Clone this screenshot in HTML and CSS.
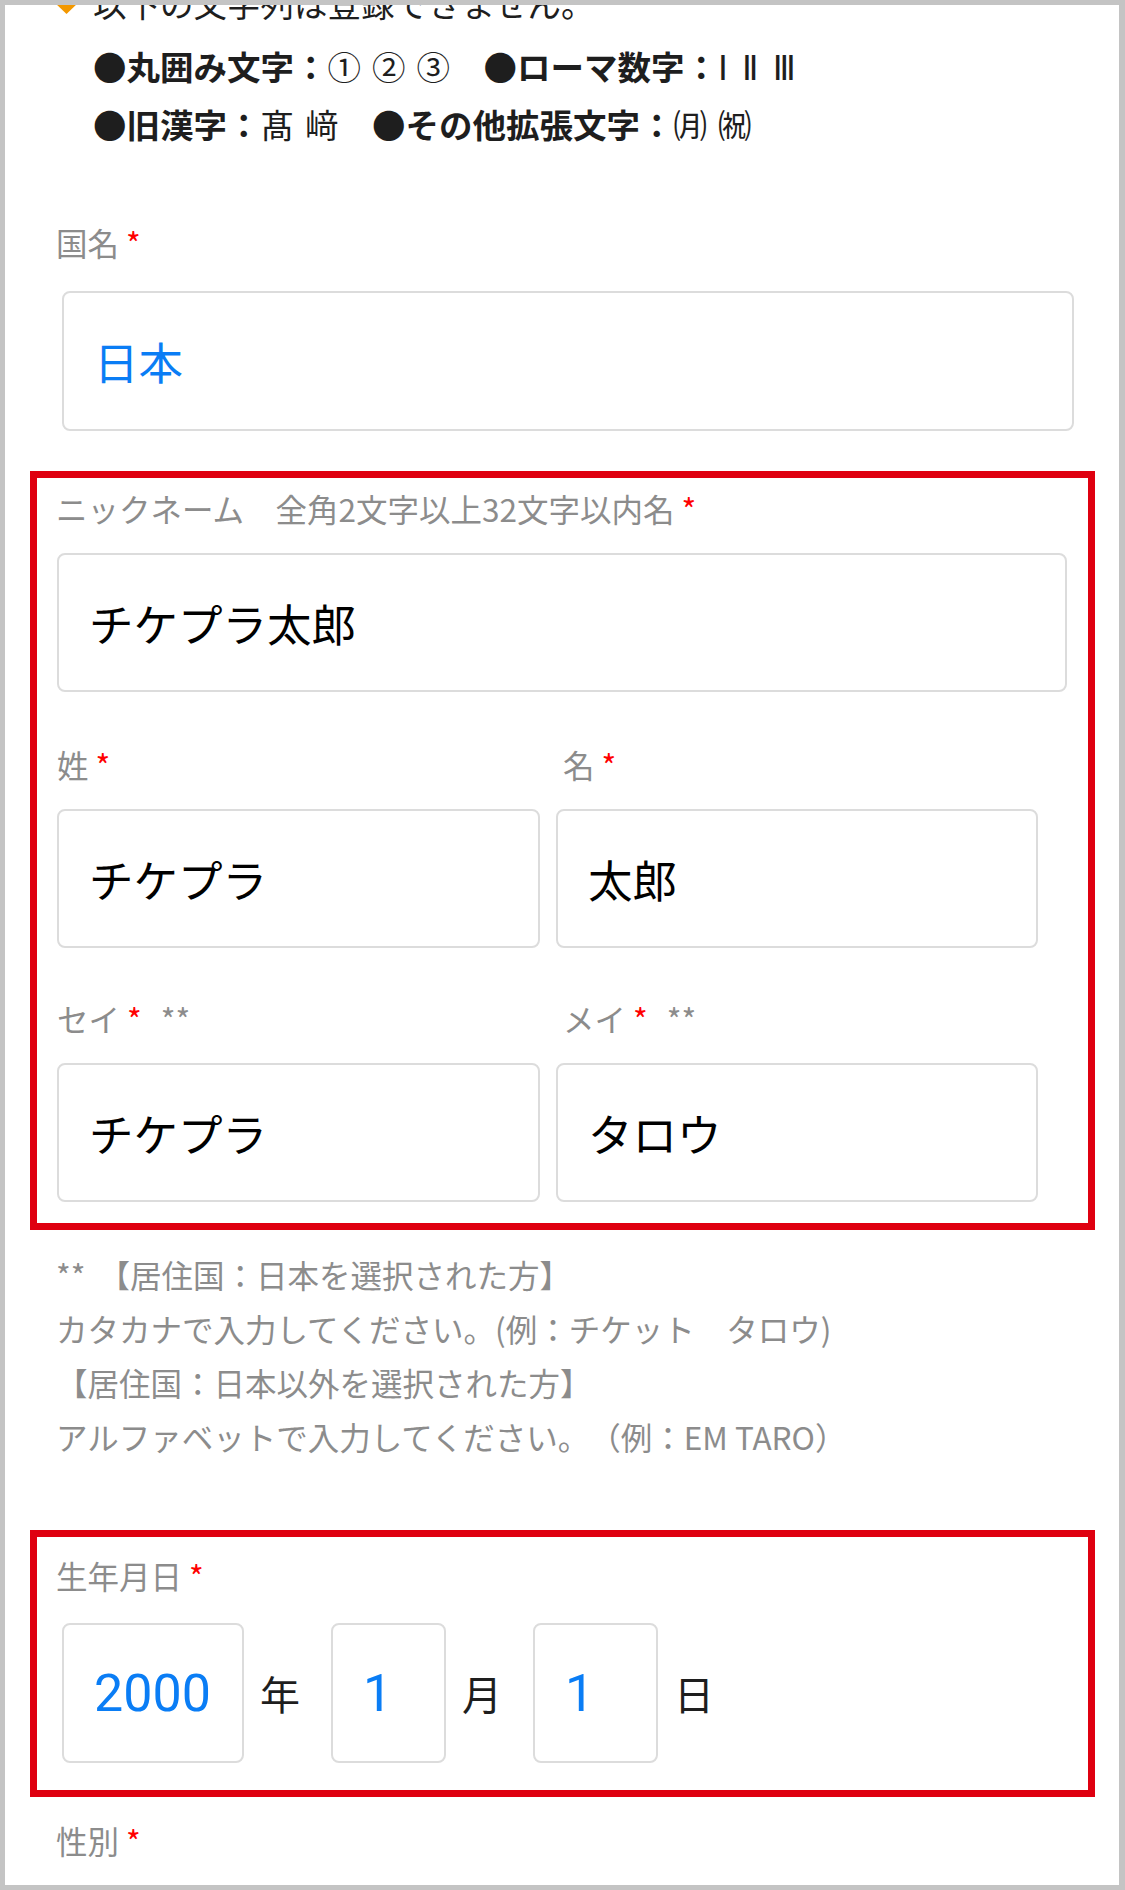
FILE: index.html
```html
<!DOCTYPE html>
<html lang="ja">
<head>
	<meta charset="UTF-8">
	<link rel="stylesheet" href="styles.css">
</head>
<body>
	<div class="screen">
		<div class="notice">
			<p class="notice-head"><svg class="notice-mark" width="25" height="12" viewBox="0 0 25 12"><polygon points="0,0 25,0 12.5,12" fill="#f39800"/></svg>以下の文字列は登録できません。</p>
			<p class="strong">●丸囲み文字：<span class="plain">① ② ③</span>　●ローマ数字：<span class="plain roman">Ⅰ Ⅱ Ⅲ</span></p>
			<p class="strong">●旧漢字：<span class="plain">髙 﨑</span>　●その他拡張文字：<span class="plain">㈪ ㈷</span></p>
		</div>

		<div class="country">
			<div class="label">国名 <span class="req">*</span></div>
			<div class="input input-country value-blue">日本</div>
		</div>

		<section class="mark mark-name">
			<div class="label">ニックネーム　全角2文字以上32文字以内名 <span class="req">*</span></div>
			<div class="input input-nick">チケプラ太郎</div>

			<div class="pair">
				<div>
					<div class="label">姓 <span class="req">*</span></div>
					<div class="input input-half">チケプラ</div>
				</div>
				<div>
					<div class="label label-right">名 <span class="req">*</span></div>
					<div class="input input-half">太郎</div>
				</div>
			</div>

			<div class="pair pair-kana">
				<div>
					<div class="label">セイ <span class="req">*</span> <span class="kana-mark">**</span></div>
					<div class="input input-half">チケプラ</div>
				</div>
				<div>
					<div class="label label-right">メイ <span class="req">*</span> <span class="kana-mark">**</span></div>
					<div class="input input-half">タロウ</div>
				</div>
			</div>
		</section>

		<div class="notes">
			<p>**<span class="note-gap"></span>【居住国：日本を選択された方】</p>
			<p>カタカナで入力してください。(例：チケット　タロウ)</p>
			<p>【居住国：日本以外を選択された方】</p>
			<p>アルファベットで入力してください。（例：EM TARO）</p>
		</div>

		<section class="mark mark-birth">
			<div class="label">生年月日 <span class="req">*</span></div>
			<div class="date-row">
				<div class="input date-box date-year">2000</div>
				<span class="unit">年</span>
				<div class="input date-box date-month">1</div>
				<span class="unit">月</span>
				<div class="input date-box date-day">1</div>
				<span class="unit">日</span>
			</div>
		</section>

		<div class="label gender">性別 <span class="req">*</span></div>
	</div>
</body>
</html>
```

FILE: styles.css
```css
* {
	box-sizing: border-box;
}

body {
	margin: 0;
	background: #c4c4c4;
}

.screen {
	width: 1125px;
	height: 1890px;
	border: 5px solid #c4c4c4;
	border-right-width: 6px;
	background: #fff;
	overflow: hidden;
	padding-left: 51px;
	font-family: "Noto Sans CJK JP", "Noto Sans", sans-serif;
	color: #1e1e1e;
	text-spacing-trim: space-all;
}

/* first line is scrolled half out of view */
.notice {
	margin-top: -35.8px;
	padding-left: 37px;
	font-size: 33.5px;
	line-height: 57.5px;
}
.notice p {
	margin: 0;
	white-space: nowrap;
}
.notice .notice-head {
	line-height: 67.8px;
}
.notice-mark {
	margin-left: -39px;
	margin-right: 14px;
	vertical-align: 3px;
}
.strong {
	font-weight: 700;
}
.plain {
	font-weight: 400;
	line-height: 1;
	word-spacing: 3.5px;
}
.roman {
	font-family: "DejaVu Sans", sans-serif;
}

.label {
	font-size: 31.5px;
	line-height: 45px;
	color: #8c8c8c;
	white-space: nowrap;
}
.req {
	color: #ff0000;
}
.kana-mark {
	margin-left: 12px;
}

.input {
	display: flex;
	align-items: center;
	border: 2px solid #dcdcdc;
	border-radius: 8px;
	padding-left: 30px;
	font-size: 44.5px;
	color: #000;
	white-space: nowrap;
}
.value-blue {
	color: #0a7df5;
}

.country {
	margin-top: 67.5px;
}
.input-country {
	width: 1012px;
	height: 140px;
	margin: 26px 0 0 6px;
}

.mark {
	width: 1065px;
	margin-left: -26px;
	border: 7px solid #df0010;
}

.mark-name {
	margin-top: 40.5px;
	padding: 8px 0 21px 19px;
}
.input-nick {
	width: 1010px;
	height: 139px;
	margin: 22px 0 0 1px;
}

.pair {
	display: grid;
	grid-template-columns: 483px 482px;
	column-gap: 16px;
	margin: 50px 0 0 1px;
}
.pair-kana {
	margin-top: 48px;
}
.label-right {
	padding-left: 7px;
}
.input-half {
	height: 139px;
	margin-top: 22px;
}

.notes {
	margin-top: 17px;
	font-size: 31.5px;
	line-height: 54px;
	color: #8c8c8c;
}
.notes p {
	margin: 0;
	white-space: nowrap;
}
.note-gap {
	display: inline-block;
	width: 13px;
}

.mark-birth {
	margin-top: 67px;
	padding: 16px 0 27px 19px;
}
.date-row {
	display: flex;
	align-items: center;
	margin: 25px 0 0 6px;
}
.date-box {
	height: 140px;
	font-family: Roboto, "Noto Sans", sans-serif;
	font-size: 52px;
	color: #0a7df5;
}
.date-year {
	width: 182px;
}
.date-month {
	width: 115px;
}
.date-day {
	width: 125px;
}
.unit {
	width: 40px;
	margin: 0 31px 0 16px;
	text-align: center;
	font-size: 40px;
	color: #1e1e1e;
}

.gender {
	margin-top: 20.5px;
}
```
